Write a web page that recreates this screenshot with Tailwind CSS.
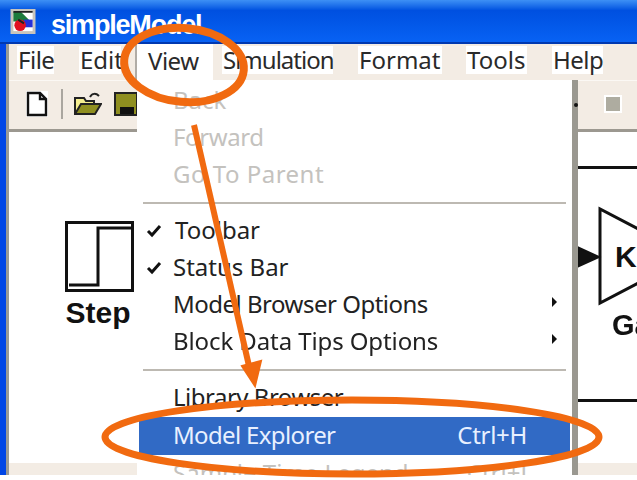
<!DOCTYPE html>
<html lang="en">
<head>
  <meta charset="UTF-8" />
  <title>simpleModel</title>
  <script src="https://cdn.jsdelivr.net/npm/@tailwindcss/browser@4"></script>
</head>
<body class="bg-white overflow-hidden">
<div class="relative w-[637px] h-[480px] overflow-hidden font-['Noto_Sans',sans-serif] text-[24px] text-[#222]">
  <div class="blur-[0.6px]">
    <!-- window -->
    <div class="flex flex-col h-[475px] bg-[#0046e6] pl-[6px]">
      <div class="-ml-[6px] h-[44px] shrink-0 flex items-center gap-[15px] pl-[10px] bg-gradient-to-b from-[#3d90f5] via-[#0050e0] via-25% to-[#0862f4] border-b-2 border-[#0038b0]">
        <svg width="26" height="25" viewBox="0 0 26 26">
          <rect width="26" height="26" fill="#c8c4bc"/>
          <rect x="3" y="3" width="20" height="20" fill="#fff"/>
          <path d="M3 3h8l10 10H3z" fill="#1c7a3c"/>
          <rect x="14" y="11" width="9" height="8" fill="#2530d8"/>
          <circle cx="10" cy="17" r="6" fill="#e01020"/>
          <path d="M3 3h20M8 11l6 4" stroke="#222" stroke-width="2"/>
        </svg>
        <span class="pt-[9px] font-['Liberation_Sans',sans-serif] font-bold text-[27px] tracking-[-1.2px] leading-none text-white">simpleModel</span>
      </div>
      <div class="flex-1 min-h-0 flex flex-col border-l-[3px] border-[#9a9a96] bg-[#f3ece4]">
        <!-- menu bar -->
        <div class="h-[36px] shrink-0 flex items-center leading-[28px] text-[#2a2a2a] pb-[4px]">
          <span class="ml-[8px] w-[37px] shrink-0 bg-white pl-[1px] tracking-[-0.5px]">File</span>
          <span class="ml-[25px] w-[42px] shrink-0 bg-white pl-[1px]">Edit</span>
          <span class="ml-[14px] -mb-[4px] h-[36px] w-[78px] shrink-0 bg-white flex items-center pl-[11px] pb-[3px] border-l-2 border-[#b0aca6] tracking-[-0.5px]">View</span>
          <span class="ml-[9px] w-[111px] shrink-0 bg-white pl-[1px] tracking-[-1px]">Simulation</span>
          <span class="ml-[25px] w-[84px] shrink-0 bg-white pl-[1px]">Format</span>
          <span class="ml-[24px] w-[61px] shrink-0 bg-white pl-[1px]">Tools</span>
          <span class="ml-[25px] w-[51px] shrink-0 bg-white pl-[1px] tracking-[-0.5px]">Help</span>
        </div>
        <!-- toolbar -->
        <div class="h-[52px] shrink-0 flex items-center border-t border-[#fbf8f4] border-b-[3px] border-b-[#9c9890] pl-[17px] pb-[2px]">
          <svg width="22" height="26" viewBox="0 0 22 26" class="bg-white">
            <path d="M2 2h12l6 6v16H2z M14 2v6h6" fill="#fff" stroke="#111" stroke-width="2.4"/>
          </svg>
          <div class="ml-[13px] w-[2px] h-[30px] bg-[#aaa69f]"></div>
          <svg width="28" height="24" viewBox="0 0 28 24" class="ml-[11px]">
            <path d="M1 22V6h9l2 3h8v4" fill="#f4ee90" stroke="#222" stroke-width="2"/>
            <path d="M1 22l6-10h20l-6 10z" fill="#8f8f20" stroke="#222" stroke-width="2"/>
            <path d="M16 5c2-4 6-4 9-1" fill="none" stroke="#222" stroke-width="2"/>
          </svg>
          <svg width="24" height="24" viewBox="0 0 24 24" class="ml-[12px]">
            <rect x="1" y="1" width="22" height="22" fill="#8f8f20" stroke="#222" stroke-width="2"/>
            <rect x="6" y="15" width="14" height="7" fill="#111"/>
          </svg>
          <div class="ml-auto mr-[17px] w-[14px] h-[14px] bg-[#aeaca0] outline-2 outline-white"></div>
        </div>
        <!-- model canvas -->
        <div class="relative flex-1 min-h-0 bg-white">
          <div class="absolute left-[56px] top-[89px] w-[69px] h-[71px] border-[3px] border-[#111]">
            <svg width="63" height="65" viewBox="0 0 63 65"><path d="M1 61h29V4h33" fill="none" stroke="#111" stroke-width="3"/></svg>
          </div>
          <div class="absolute left-[47px] top-[163px] w-[84px] text-center font-['Liberation_Sans',sans-serif] font-bold text-[30px] leading-[36px] text-[#111]">Step</div>

          <div class="absolute left-[569px] top-[34px] w-[60px] h-[236px] border-y-[3px] border-[#111]"></div>
          <svg class="absolute left-[560px] top-[72px]" width="77" height="110" viewBox="0 0 77 110">
            <path d="M31 5v94l90-47z" fill="#fff" stroke="#111" stroke-width="3"/>
            <path d="M6 53h8M8 43l22 10-22 10z" fill="#111" stroke="#111" stroke-width="2"/>
          </svg>
          <div class="absolute left-[606px] top-[107px] font-['Liberation_Sans',sans-serif] font-bold text-[30px] leading-[36px] text-[#111]">K</div>
          <div class="absolute left-[603px] top-[175px] font-['Liberation_Sans',sans-serif] font-bold text-[29px] leading-[36px] text-[#111]">Ga</div>
        </div>
        <!-- status bar -->
        <div class="h-[12px] shrink-0 bg-[#f3ece4]"></div>
      </div>
    </div>

    <!-- view menu -->
    <div class="absolute left-[137px] top-[80px] w-[441px] h-[395px] overflow-hidden bg-white border-r-[6px] border-[#9a9890] pt-[2px] leading-[36px]">
      <div class="h-[37px] pl-[36px] text-[#c4c2be]">Back</div>
      <div class="h-[37px] pl-[36px] text-[#c4c2be] tracking-[-0.4px]">Forward</div>
      <div class="h-[37px] pl-[36px] text-[#c4c2be] tracking-[0.5px]">Go To Parent</div>
      <div class="h-[19px] flex items-center px-[6px]"><div class="h-[2px] w-full bg-[#bdb9b2]"></div></div>
      <div class="relative h-[37px] pl-[38px]">
        <svg class="absolute left-[9px] top-[12px]" width="16" height="14" viewBox="0 0 16 14"><path d="M2 7l4 4 8-9" fill="none" stroke="#111" stroke-width="3"/></svg>
        Toolbar
      </div>
      <div class="relative h-[37px] pl-[36px]">
        <svg class="absolute left-[9px] top-[12px]" width="16" height="14" viewBox="0 0 16 14"><path d="M2 7l4 4 8-9" fill="none" stroke="#111" stroke-width="3"/></svg>
        Status Bar
      </div>
      <div class="relative h-[37px] pl-[36px] tracking-[-0.5px]">
        Model Browser Options
        <svg class="absolute left-[414px] top-[10px]" width="7" height="12" viewBox="0 0 7 12"><path d="M1 1l5 5-5 5z" fill="#111"/></svg>
      </div>
      <div class="relative h-[37px] pl-[36px] tracking-[-0.1px]">
        Block Data Tips Options
        <svg class="absolute left-[414px] top-[10px]" width="7" height="12" viewBox="0 0 7 12"><path d="M1 1l5 5-5 5z" fill="#111"/></svg>
      </div>
      <div class="h-[19px] flex items-center px-[6px]"><div class="h-[2px] w-full bg-[#bdb9b2]"></div></div>
      <div class="h-[38px] pl-[36px] tracking-[-0.5px] leading-[35px]">Library Browser</div>
      <div class="h-[38px] mx-[2px] pl-[34px] pr-[43px] pb-[3px] flex justify-between items-center bg-[#316ac5] text-[#e8f0ff]"><span class="tracking-[-0.65px]">Model Explorer</span><span class="tracking-[-0.3px]">Ctrl+H</span></div>
      <div class="h-[37px] pl-[36px] pr-[45px] flex justify-between text-[#c4c2be]"><span>Sample Time Legend</span><span>Ctrl+J</span></div>
    </div>
    <div class="absolute left-[574px] top-[103px] w-[4px] h-[4px] rounded-full bg-[#111]"></div>
  </div>

  <!-- hand-drawn annotation over the screenshot -->
  <svg class="absolute inset-0" width="637" height="480" viewBox="0 0 637 480">
    <ellipse cx="184" cy="65" rx="60" ry="37" transform="rotate(5 184 65)" fill="none" stroke="#f16a10" stroke-width="8"/>
    <ellipse cx="352" cy="437" rx="247" ry="37" fill="none" stroke="#f16a10" stroke-width="7"/>
    <path d="M194 125L249 366" stroke="#f16a10" stroke-width="6" fill="none"/>
    <path d="M242 366l19-5-6 25z" fill="#f16a10" stroke="#f16a10" stroke-width="2"/>
  </svg>
</div>
</body>
</html>
